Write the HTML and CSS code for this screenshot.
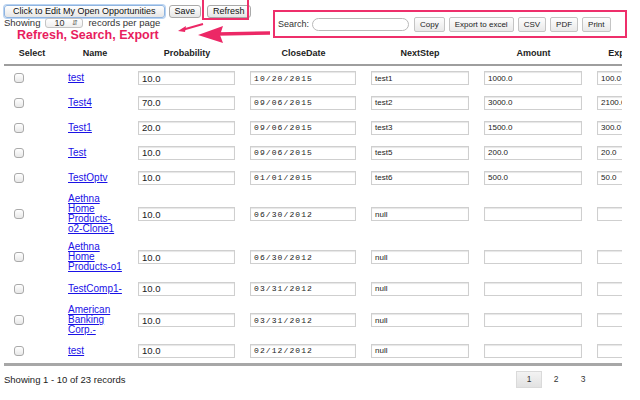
FILE: index.html
```html
<!DOCTYPE html>
<html>
<head>
<meta charset="utf-8">
<link rel="stylesheet" href="styles.css">
</head>
<body>
<div class="page">
  <div class="top">
    <div class="controls">
      <div class="btnrow">
        <button class="btn focus">Click to Edit My Open Opportunities</button>
        <button class="btn save">Save</button>
        <button class="btn refresh">Refresh</button>
      </div>
      <div class="lenrow">Showing <span class="select"><span>10</span><span class="arr">&#8693;</span></span> records per page</div>
    </div>
    <div class="tools">
      <span class="slabel">Search:</span>
      <span class="search"></span>
      <button class="tbtn">Copy</button>
      <button class="tbtn">Export to excel</button>
      <button class="tbtn">CSV</button>
      <button class="tbtn">PDF</button>
      <button class="tbtn">Print</button>
    </div>
  </div>

  <div class="tablewrap">
    <table class="grid">
      <colgroup>
        <col class="c1"><col class="c2"><col class="c3"><col class="c4"><col class="c5"><col class="c6"><col class="c7">
      </colgroup>
      <thead>
        <tr><th>Select</th><th>Name</th><th>Probability</th><th>CloseDate</th><th>NextStep</th><th>Amount</th><th>ExpectedRevenue</th></tr>
      </thead>
      <tbody>
        <tr><td class="sel"><span class="cb"></span></td><td class="nm"><a href="#">test</a></td><td class="p"><span class="in prob">10.0</span></td><td class="d"><span class="in date">10/20/2015</span></td><td class="n"><span class="in sm">test1</span></td><td class="a"><span class="in sm">1000.0</span></td><td class="e"><span class="in sm">100.0</span></td></tr>
        <tr><td class="sel"><span class="cb"></span></td><td class="nm"><a href="#">Test4</a></td><td class="p"><span class="in prob">70.0</span></td><td class="d"><span class="in date">09/06/2015</span></td><td class="n"><span class="in sm">test2</span></td><td class="a"><span class="in sm">3000.0</span></td><td class="e"><span class="in sm">2100.0</span></td></tr>
        <tr><td class="sel"><span class="cb"></span></td><td class="nm"><a href="#">Test1</a></td><td class="p"><span class="in prob">20.0</span></td><td class="d"><span class="in date">09/06/2015</span></td><td class="n"><span class="in sm">test3</span></td><td class="a"><span class="in sm">1500.0</span></td><td class="e"><span class="in sm">300.0</span></td></tr>
        <tr><td class="sel"><span class="cb"></span></td><td class="nm"><a href="#">Test</a></td><td class="p"><span class="in prob">10.0</span></td><td class="d"><span class="in date">09/06/2015</span></td><td class="n"><span class="in sm">test5</span></td><td class="a"><span class="in sm">200.0</span></td><td class="e"><span class="in sm">20.0</span></td></tr>
        <tr><td class="sel"><span class="cb"></span></td><td class="nm"><a href="#">TestOptv</a></td><td class="p"><span class="in prob">10.0</span></td><td class="d"><span class="in date">01/01/2015</span></td><td class="n"><span class="in sm">test6</span></td><td class="a"><span class="in sm">500.0</span></td><td class="e"><span class="in sm">50.0</span></td></tr>
        <tr><td class="sel"><span class="cb"></span></td><td class="nm"><a href="#">Aethna Home Products-o2-Clone1</a></td><td class="p"><span class="in prob">10.0</span></td><td class="d"><span class="in date">06/30/2012</span></td><td class="n"><span class="in sm">null</span></td><td class="a"><span class="in sm"></span></td><td class="e"><span class="in sm"></span></td></tr>
        <tr><td class="sel"><span class="cb"></span></td><td class="nm"><a href="#">Aethna Home Products-o1</a></td><td class="p"><span class="in prob">10.0</span></td><td class="d"><span class="in date">06/30/2012</span></td><td class="n"><span class="in sm">null</span></td><td class="a"><span class="in sm"></span></td><td class="e"><span class="in sm"></span></td></tr>
        <tr><td class="sel"><span class="cb"></span></td><td class="nm"><a href="#">TestComp1-</a></td><td class="p"><span class="in prob">10.0</span></td><td class="d"><span class="in date">03/31/2012</span></td><td class="n"><span class="in sm">null</span></td><td class="a"><span class="in sm"></span></td><td class="e"><span class="in sm"></span></td></tr>
        <tr><td class="sel"><span class="cb"></span></td><td class="nm"><a href="#">American Banking Corp.-</a></td><td class="p"><span class="in prob">10.0</span></td><td class="d"><span class="in date">03/31/2012</span></td><td class="n"><span class="in sm">null</span></td><td class="a"><span class="in sm"></span></td><td class="e"><span class="in sm"></span></td></tr>
        <tr><td class="sel"><span class="cb"></span></td><td class="nm"><a href="#">test</a></td><td class="p"><span class="in prob">10.0</span></td><td class="d"><span class="in date">02/12/2012</span></td><td class="n"><span class="in sm">null</span></td><td class="a"><span class="in sm"></span></td><td class="e"><span class="in sm"></span></td></tr>
      </tbody>
    </table>
  </div>

  <div class="footer">
    <span class="info">Showing 1 - 10 of 23 records</span>
    <div class="pager"><span class="pg cur">1</span><span class="pg">2</span><span class="pg">3</span></div>
  </div>

  <div class="note-box"></div>
  <div class="note-text">Refresh, Search, Export</div>
  <svg class="note-arrows" width="110" height="30" viewBox="0 0 110 30">
    <path d="M33 6 L12 12" stroke="#ec2866" stroke-width="2" fill="none"/>
    <path d="M8 13 L16 8 L15 14 Z" fill="#ec2866"/>
    <path d="M48 16 L100 15" stroke="#ec2866" stroke-width="3.5" fill="none"/>
    <path d="M28 17 L53 8 L50 17 L53 25 Z" fill="#ec2866"/>
  </svg>
</div>
</body>
</html>
```
FILE: styles.css
```css
* { box-sizing: border-box; }
html, body { margin: 0; padding: 0; background: #fff; }
body { font-family: "Liberation Sans", Arial, sans-serif; font-size: 10px; color: #222; }
.page { position: relative; width: 640px; height: 400px; overflow: hidden; }

.top { display: flex; justify-content: space-between; height: 44px; }
.controls { padding: 5px 0 0 4px; }
.btnrow { display: flex; gap: 4px; height: 13px; }
.btn {
  font-family: "Liberation Sans", Arial, sans-serif; font-size: 9px; color: #111;
  height: 13px; padding: 0 5px; line-height: 11px;
  border: 1px solid #a9a9a9; border-radius: 3px;
  background: linear-gradient(#ffffff, #e6e6e6);
}
.btn.focus { padding: 0 8px; border-color: #8fb4e0; box-shadow: 0 0 0 1px #b9d3f1; }
.btn.refresh { margin-left: 2px; }
.lenrow { display: flex; align-items: center; margin-top: 0; height: 9px; font-size: 9.5px; color: #333; }
.select {
  display: inline-flex; justify-content: space-between; align-items: center;
  width: 38px; height: 10px; margin: 0 5px; padding: 0 4px 0 8px;
  border: 1px solid #c4c4c4; border-radius: 3px; font-size: 9px;
  background: linear-gradient(#fff, #eee);
}
.select .arr { font-size: 7px; color: #555; }

.tools {
  display: flex; align-items: center;
  margin: 10px 13px 0 0; width: 354px; height: 28px;
  border: 2px solid #ee2f6b; padding: 0 0 0 3px;
}
.slabel { font-size: 9px; color: #333; margin-right: 3px; }
.search { width: 97px; height: 13px; border: 1px solid #b9b9b9; border-radius: 7px; background: #fff; margin-right: 1px; }
.tbtn {
  font-family: "Liberation Sans", Arial, sans-serif; font-size: 8px; color: #222;
  height: 15px; padding: 0 5px; margin-left: 4px;
  border: 1px solid #c4c4c4; border-radius: 2px;
  background: linear-gradient(#fdfdfd, #e9e9e9);
}

.tablewrap { margin-left: 4px; width: 618px; overflow: hidden; }
.grid { border-collapse: collapse; table-layout: fixed; width: 700px; }
.c1 { width: 56px; } .c2 { width: 70px; } .c3 { width: 114px; } .c4 { width: 119px; }
.c5 { width: 114px; } .c6 { width: 113px; } .c7 { width: 114px; }
.grid th {
  height: 21px; padding: 0 0 2px; font-size: 9px; font-weight: bold; color: #222;
  text-align: center; white-space: nowrap; border-bottom: 2px solid #9e9e9e;
}
.grid td { height: 25px; padding: 4px 0; vertical-align: middle; }
.grid tbody tr:last-child td { border-bottom: 3px solid #a7a7a7; }
.sel { padding-left: 10px !important; }
.cb {
  display: block; width: 10px; height: 10px; border: 1px solid #aaa; border-radius: 3px;
  background: linear-gradient(#fff, #e8e8e8);
}
.nm { padding-left: 8px !important; padding-right: 6px !important; line-height: 10px; font-size: 10px; }
.nm a { color: #1a12e6; text-decoration: underline; }
.p { padding-left: 8px !important; }
.d { padding-left: 6px !important; }
.n { padding-left: 8px !important; }
.a { padding-left: 7px !important; }
.e { padding-left: 7px !important; }
.in {
  display: flex; align-items: center; height: 14px; width: 97px;
  border: 1px solid #cfcfcf; box-shadow: inset 0 1px 1px #e6e6e6; background: #fff;
  padding: 0 3px; white-space: nowrap; overflow: hidden; color: #222;
}
.prob { font-size: 9.5px; }
.date { width: 106px; font-family: "Liberation Mono", monospace; font-size: 8px; letter-spacing: 1.1px; padding-left: 3px; }
.sm { width: 98px; font-size: 8px; }

.footer { display: flex; justify-content: space-between; align-items: center; margin-left: 4px; width: 618px; padding-top: 5px; }
.info { font-size: 9.5px; color: #222; }
.pager { display: flex; gap: 1px; margin-right: 26px; }
.pg { width: 26px; height: 17px; display: flex; align-items: center; justify-content: center; font-size: 8.5px; color: #333; }
.pg.cur { background: linear-gradient(#f3f3f3, #e2e2e2); border: 1px solid #dadada; }

.note-box { position: absolute; left: 202px; top: -2px; width: 47px; height: 22px; border: 2px solid #ee2f6b; }
.note-text {
  position: absolute; left: 17px; top: 28px; font-size: 12.5px; font-weight: bold; color: #e81d5e;
  text-shadow: 0 0 2px #fff, 0 0 2px #fff;
}
.note-arrows { position: absolute; left: 170px; top: 18px; }
```
